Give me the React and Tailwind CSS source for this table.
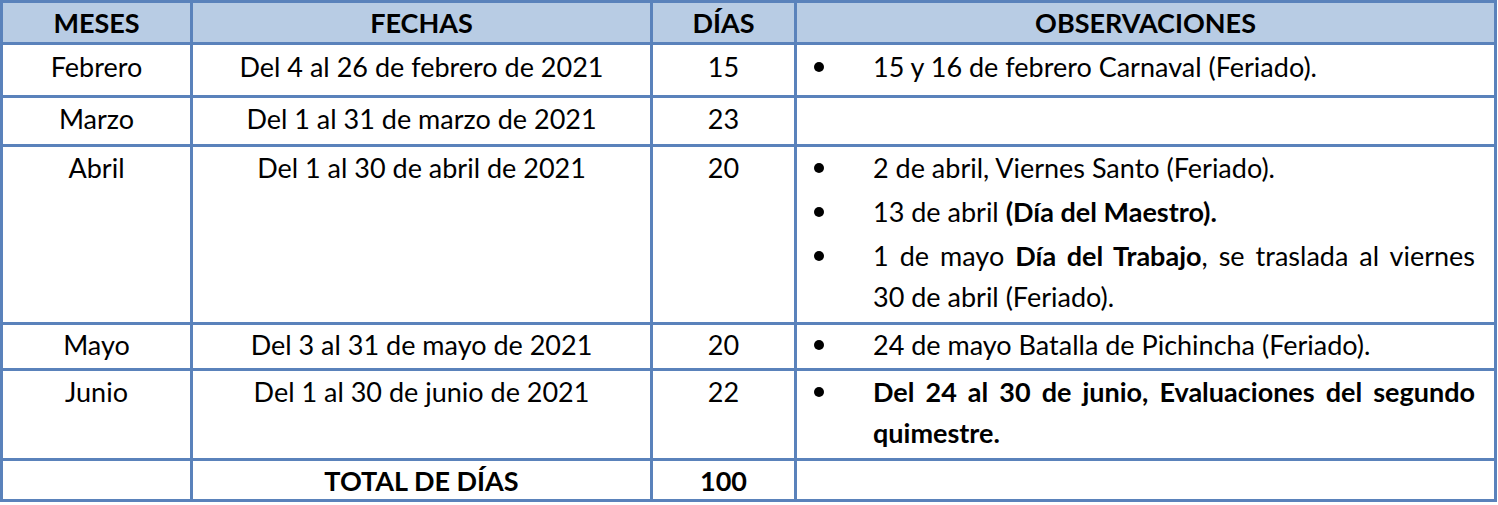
import React from "react";

const Bullet = ({ children, className = "", dot = "mt-[16px]" }) => (
  <div className={"flex " + className}>
    <div className="w-[76px] shrink-0 pl-[17px] flex items-start">
      <span className={dot + " block h-[10px] w-[10px] rounded-full bg-black"}></span>
    </div>
    <div className="flex-1 pr-[19px]">{children}</div>
  </div>
);

const Justified = ({ first, second }) => (
  <>
    <span className="block text-justify [text-align-last:justify]">{first}</span>
    <span className="block">{second}</span>
  </>
);

export default function App() {
  const cell = "bg-white text-center";
  return (
    <div className="bg-white min-h-screen">
      <div className="grid w-fit grid-cols-[187px_457px_141px_697px] grid-rows-[39px_50px_46px_175px_43px_87px_38px] gap-[3px] bg-[#5a82bb] p-[3px] font-['Lato','Open_Sans',sans-serif] text-[27px] leading-[41px] text-black">
        {/* header */}
        <div className="bg-[#b8cce4] flex items-center justify-center font-bold">MESES</div>
        <div className="bg-[#b8cce4] flex items-center justify-center font-bold">FECHAS</div>
        <div className="bg-[#b8cce4] flex items-center justify-center font-bold">DÍAS</div>
        <div className="bg-[#b8cce4] flex items-center justify-center font-bold">OBSERVACIONES</div>

        {/* Febrero */}
        <div className={cell + " pt-[1px]"}>Febrero</div>
        <div className={cell + " pt-[1px]"}>Del 4 al 26 de febrero de 2021</div>
        <div className={cell + " pt-[1px]"}>15</div>
        <div className="bg-white pt-[1px]">
          <Bullet>15 y 16 de febrero Carnaval (Feriado).</Bullet>
        </div>

        {/* Marzo */}
        <div className={cell}>Marzo</div>
        <div className={cell}>Del 1 al 31 de marzo de 2021</div>
        <div className={cell}>23</div>
        <div className="bg-white"></div>

        {/* Abril */}
        <div className={cell}>Abril</div>
        <div className={cell}>Del 1 al 30 de abril de 2021</div>
        <div className={cell}>20</div>
        <div className="bg-white flex flex-col gap-[3px]">
          <Bullet>2 de abril, Viernes Santo (Feriado).</Bullet>
          <Bullet>
            13 de abril <b>(Día del Maestro).</b>
          </Bullet>
          <Bullet>
            <Justified
              first={
                <>
                  1 de mayo <b>Día del Trabajo</b>, se traslada al viernes
                </>
              }
              second="30 de abril (Feriado)."
            />
          </Bullet>
        </div>

        {/* Mayo */}
        <div className={cell + " leading-[39px]"}>Mayo</div>
        <div className={cell + " leading-[39px]"}>Del 3 al 31 de mayo de 2021</div>
        <div className={cell + " leading-[39px]"}>20</div>
        <div className="bg-white leading-[39px]">
          <Bullet dot="mt-[15px]">24 de mayo Batalla de Pichincha (Feriado).</Bullet>
        </div>

        {/* Junio */}
        <div className={cell}>Junio</div>
        <div className={cell}>Del 1 al 30 de junio de 2021</div>
        <div className={cell}>22</div>
        <div className="bg-white font-bold">
          <Bullet>
            <Justified
              first="Del 24 al 30 de junio, Evaluaciones del segundo"
              second="quimestre."
            />
          </Bullet>
        </div>

        {/* Total */}
        <div className="bg-white"></div>
        <div className="bg-white flex items-center justify-center font-bold">TOTAL DE DÍAS</div>
        <div className="bg-white flex items-center justify-center font-bold">100</div>
        <div className="bg-white"></div>
      </div>
    </div>
  );
}
